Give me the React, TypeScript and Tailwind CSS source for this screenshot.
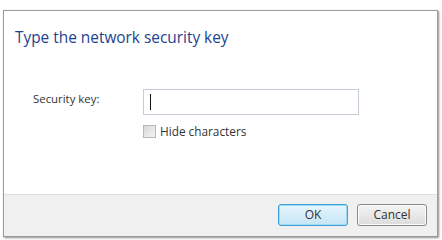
import React from "react";

export default function App() {
  const font = { fontFamily: '"Open Sans", "Noto Sans", sans-serif' };
  return (
    <div className="w-[442px] h-[240px] bg-white overflow-hidden" style={font}>
      <div className="ml-[3px] mt-[10px] w-[435px] h-[227px] border border-[#9a9a9a] shadow-[1px_1px_2px_rgba(0,0,0,0.45)] bg-white flex flex-col">
        <div className="flex-1 bg-white">
          <div className="pl-[11px] pt-[17px] text-[15.4px] leading-[20px] text-[#23428f]">
            Type the network security key
          </div>
          <div className="flex mt-[41px] pl-[29px]">
            <div className="w-[110px] text-[11.4px] leading-[16px] pt-[2px] text-[#333]">Security key:</div>
            <div className="flex flex-col">
              <div className="w-[216px] h-[26px] border border-[#c5ced6] bg-white flex items-center pl-[6px]">
                <div className="w-[1px] h-[16px] bg-[#111]" />
              </div>
              <div className="flex items-center mt-[8px] gap-[4px]">
                <div className="w-[13px] h-[13px] border border-[#b8b8b8] bg-[linear-gradient(135deg,#d8d8d8,#f4f4f4)]" />
                <span className="text-[11.8px] leading-[16px] text-[#333]">Hide characters</span>
              </div>
            </div>
          </div>
        </div>
        <div className="h-[42px] bg-[#f0f0f0] border-t border-[#e0e0e0] flex items-center justify-end gap-[9px] pr-[10px] pb-[1px]">
          <button className="w-[70px] h-[22px] rounded-[3px] border border-[#3c9fd6] bg-[linear-gradient(#e8f6fd,#c4e5f6)] shadow-[inset_0_0_0_1px_#9edcf5] text-[12px] text-[#333] leading-none">
            OK
          </button>
          <button className="w-[70px] h-[22px] rounded-[3px] border border-[#8a8a8a] bg-[linear-gradient(#f4f4f4,#dcdcdc)] shadow-[inset_0_0_0_1px_#fafafa] text-[12px] text-[#333] leading-none">
            Cancel
          </button>
        </div>
      </div>
    </div>
  );
}
